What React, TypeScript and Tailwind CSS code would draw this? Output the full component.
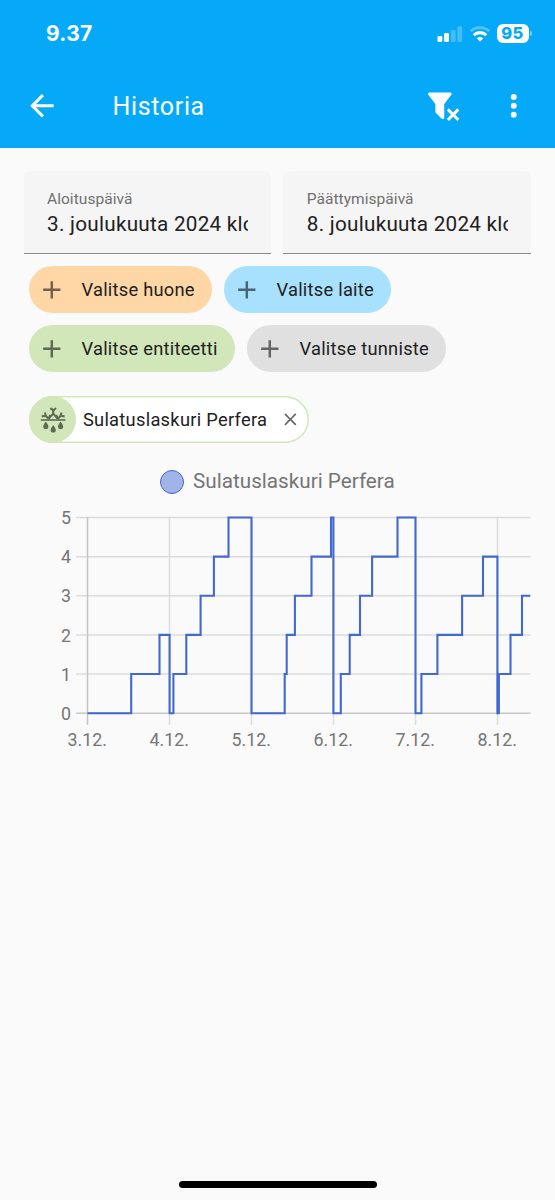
import type { ReactNode } from "react";

const icons = {
  back: "M20,11V13H8L13.5,18.5L12.08,19.92L4.16,12L12.08,4.08L13.5,5.5L8,11H20Z",
  dots: "M12,16A2,2 0 0,1 14,18A2,2 0 0,1 12,20A2,2 0 0,1 10,18A2,2 0 0,1 12,16M12,10A2,2 0 0,1 14,12A2,2 0 0,1 12,14A2,2 0 0,1 10,12A2,2 0 0,1 12,10M12,4A2,2 0 0,1 14,6A2,2 0 0,1 12,8A2,2 0 0,1 10,6A2,2 0 0,1 12,4Z",
  plus: "M19,13H13V19H11V13H5V11H11V5H13V11H19V13Z",
  close: "M19,6.41L17.59,5L12,10.59L6.41,5L5,6.41L10.59,12L5,17.59L6.41,19L12,13.41L17.59,19L19,17.59L13.41,12L19,6.41Z",
  filterRemove:
    "M14.73,20.83L17.58,18L14.73,15.17L16.15,13.76L19,16.57L21.8,13.76L23.22,15.17L20.41,18L23.22,20.83L21.8,22.24L19,19.4L16.15,22.24L14.73,20.83M13,19.88C13.04,20.18 12.94,20.5 12.71,20.71C12.32,21.1 11.69,21.1 11.3,20.71L7.29,16.7C7.06,16.47 6.96,16.16 7,15.87V10.75L2.21,4.62C1.87,4.19 1.95,3.56 2.38,3.22C2.57,3.08 2.78,3 3,3V3H17V3C17.22,3 17.43,3.08 17.62,3.22C18.05,3.56 18.13,4.19 17.79,4.62L13,10.75V19.88Z",
};

function Icon({ path, className }: { path: string; className: string }) {
  return (
    <svg viewBox="0 0 24 24" className={`shrink-0 fill-current ${className}`}>
      <path d={path} />
    </svg>
  );
}

function StatusBar() {
  return (
    <div className="flex h-[64px] items-center justify-between pt-[3px] pr-[23px] pl-[46px]">
      <span className="font-['Inter'] text-[21px] leading-none font-bold tracking-[0.3px]">9.37</span>
      <div className="flex items-center">
        <svg viewBox="0 0 26 16" className="h-4 w-[26px] fill-white">
          <rect x="0.5" y="10" width="4.8" height="6" rx="1.2" />
          <rect x="7.1" y="7" width="4.8" height="9" rx="1.2" />
          <rect x="13.8" y="4" width="4.8" height="12" rx="1.2" opacity="0.25" />
          <rect x="20.4" y="0.3" width="4.8" height="15.7" rx="1.2" opacity="0.25" />
        </svg>
        <svg viewBox="0 0 22 16" className="ml-1.5 h-4 w-[22px]" fill="none" stroke="white">
          <path d="M1.6 5.3C7 .4 15 .4 20.4 5.3" strokeWidth="2.7" opacity="0.3" />
          <path d="M4.8 9.1C8.4 5.7 13.6 5.7 17.2 9.1" strokeWidth="3.2" />
          <path d="M7.8 12.4C9.7 10.6 12.3 10.6 14.2 12.4L11 15.6Z" fill="white" stroke="none" />
        </svg>
        <div className="ml-1.5 flex h-[19px] w-[32px] items-center justify-center rounded-[6px] bg-white font-['Inter'] text-[16.5px] leading-none font-extrabold tracking-[0.3px] text-[#03a9f4]">
          95
        </div>
        <div className="ml-[1.5px] h-[5px] w-[2px] rounded-r-full bg-white/45" />
      </div>
    </div>
  );
}

function Header() {
  return (
    <header className="h-[148px] bg-[#05a9f7] text-white">
      <StatusBar />
      <div className="flex h-[84px] items-center pr-[24px] pl-[24px]">
        <Icon path={icons.back} className="size-[35.5px]" />
        <h1 className="ml-[53px] flex-1 pt-[1px] text-[25px] leading-none tracking-[0.65px]">Historia</h1>
        <Icon path={icons.filterRemove} className="size-[35.5px]" />
        <Icon path={icons.dots} className="ml-[35.5px] size-[35.5px]" />
      </div>
    </header>
  );
}

function DateField({ label, value }: { label: string; value: string }) {
  return (
    <div className="h-[83px] flex-1 overflow-hidden rounded-t-[6px] border-b-[1.5px] border-[#8a8a8a] bg-[#f5f5f5] pr-[24px] pl-[23.5px] pt-[19px]">
      <div className="text-[15.5px] leading-[18px] tracking-[0.05px] text-[#6f6f6f]">{label}</div>
      <div className="w-[201px] overflow-hidden text-[20.7px] leading-[32px] tracking-[0.26px] whitespace-nowrap text-[#212121]">
        {value}
      </div>
    </div>
  );
}

function AddChip({ className, children }: { className: string; children: ReactNode }) {
  return (
    <div className={`flex h-[47px] items-center rounded-full pl-[7.5px] text-[18.3px] text-[#212121] ${className}`}>
      <Icon path={icons.plus} className="size-[29.6px] text-black/55" />
      <span className="ml-[15px] pt-[2px] leading-none tracking-[0.25px] whitespace-nowrap">{children}</span>
    </div>
  );
}

function SnowflakeMelt() {
  return (
    <svg viewBox="0 0 26 26" className="size-[26px]" fill="none" stroke="#5f6b54" strokeWidth="2.1">
      <path d="M0.8 13H25.4" strokeWidth="1.6" />
      <path d="M13.2 2.5V7.2M10.4 1L13.2 3.6L16 1M13.2 6.6L8.7 11.6M13.2 6.6L17.7 11.6" />
      <path d="M1.8 9.4L5.8 8.8L8.7 12M5.8 8.8L4.9 5.4M8.7 12L10.2 7.9M24.6 9.4L20.6 8.8L17.7 12M20.6 8.8L21.5 5.4M17.7 12L16.2 7.9" />
      <g fill="#5f6b54" stroke="none">
        <path d="M5.8 14.6C4.7 16.4 3.2 18 3.2 19.6A2.6 2.6 0 0 0 8.4 19.6C8.4 18 6.9 16.4 5.8 14.6Z" />
        <path d="M13.2 18.1C12.1 19.9 10.6 21.4 10.6 23A2.6 2.6 0 0 0 15.8 23C15.8 21.4 14.3 19.9 13.2 18.1Z" />
        <path d="M20.6 14.6C19.5 16.4 18 18 18 19.6A2.6 2.6 0 0 0 23.2 19.6C23.2 18 21.7 16.4 20.6 14.6Z" />
      </g>
    </svg>
  );
}

const dayTicks = [
  { x: 87.5, label: "3.12." },
  { x: 169.5, label: "4.12." },
  { x: 251.5, label: "5.12." },
  { x: 333.5, label: "6.12." },
  { x: 415.5, label: "7.12." },
  { x: 497.5, label: "8.12." },
];

// [x position, counter value from there on]
const changes: [number, number][] = [
  [131.2, 1], [159.5, 2], [169.6, 0], [173.4, 1], [186.3, 2], [200.6, 3], [213.9, 4], [228.5, 5],
  [251.5, 0], [284.7, 1], [286.7, 2], [294.9, 3], [311.5, 4], [331, 5], [333.4, 0], [340.8, 1],
  [349.7, 2], [360, 3], [372.1, 4], [397.5, 5], [415.5, 0], [421.4, 1], [437.4, 2], [462.1, 3],
  [483, 4], [497.4, 0], [498.9, 1], [510.5, 2], [522, 3],
];

const yOf = (v: number) => 213.2 - v * 39.14;
const linePath = `M87.5 ${yOf(0)}${changes.map(([x, v]) => `H${x}V${yOf(v)}`).join("")}H530.3`;

function Chart() {
  return (
    <svg viewBox="0 0 555 260" className="h-[260px] w-[555px]">
      {[0, 1, 2, 3, 4, 5].map((v) => (
        <g key={v}>
          <path d={`M76 ${yOf(v)}H530.5`} stroke={v === 0 ? "#c8c8c8" : "#dcdcdc"} strokeWidth="1.5" />
          <text x="71" y={yOf(v) + 6.6} textAnchor="end" fontSize="17.8" fill="#757575">
            {v}
          </text>
        </g>
      ))}
      {dayTicks.map(({ x, label }, i) => (
        <g key={label}>
          <path d={`M${x} 17V225`} stroke={i === 0 ? "#c4c4c4" : "#dcdcdc"} strokeWidth="1.5" />
          <text x={x - 0.3} y="246.3" textAnchor="middle" fontSize="17.8" fill="#757575">
            {label}
          </text>
        </g>
      ))}
      <path d={linePath} fill="none" stroke="#4269d0" strokeWidth="2.1" />
    </svg>
  );
}

export default function App() {
  return (
    <div className="flex h-[1200px] w-[555px] flex-col overflow-hidden bg-[#fafafa] font-['Roboto',sans-serif]">
      <Header />
      <main className="flex flex-1 flex-col">
        <div className="mr-[24px] ml-[23.5px] mt-[23px] flex gap-[12px]">
          <DateField label="Aloituspäivä" value="3. joulukuuta 2024 klo 0.00" />
          <DateField label="Päättymispäivä" value="8. joulukuuta 2024 klo 12.00" />
        </div>
        <div className="mt-[12px] ml-[29.4px] flex gap-[12px]">
          <AddChip className="w-[183px] bg-[#ffd6a5]">Valitse huone</AddChip>
          <AddChip className="w-[167px] bg-[#a8e1fd]">Valitse laite</AddChip>
        </div>
        <div className="mt-[12px] ml-[29.4px] flex gap-[12px]">
          <AddChip className="w-[206px] bg-[#d1e7b9]">Valitse entiteetti</AddChip>
          <AddChip className="w-[199px] bg-[#e0e0e0]">Valitse tunniste</AddChip>
        </div>
        <div className="mt-[24px] ml-[29.4px] flex h-[47px] w-[280px] items-center rounded-full bg-white text-[#212121] inset-ring-[1.5px] inset-ring-[#d1e7b9]">
          <div className="flex size-[47px] items-center justify-center rounded-full bg-[#d1e7b9]">
            <SnowflakeMelt />
          </div>
          <span className="ml-[6.5px] flex-1 pt-[2px] text-[18.3px] leading-none tracking-[0.28px] whitespace-nowrap">
            Sulatuslaskuri Perfera
          </span>
          <Icon path={icons.close} className="mr-[9px] size-[20.7px] text-black/60" />
        </div>
        <div className="mt-[26px] flex h-[26px] items-center pl-[160px]">
          <div className="size-[24px] rounded-full border-[1.5px] border-[#4269d0] bg-[#a0b4e7]" />
          <span className="ml-[9px] pb-[2px] text-[20.7px] leading-none text-[#757575]">Sulatuslaskuri Perfera</span>
        </div>
        <div className="mt-[5px]">
          <Chart />
        </div>
        <div className="mt-auto mb-[12px] h-[7px] w-[198px] self-center rounded-full bg-black" />
      </main>
    </div>
  );
}
